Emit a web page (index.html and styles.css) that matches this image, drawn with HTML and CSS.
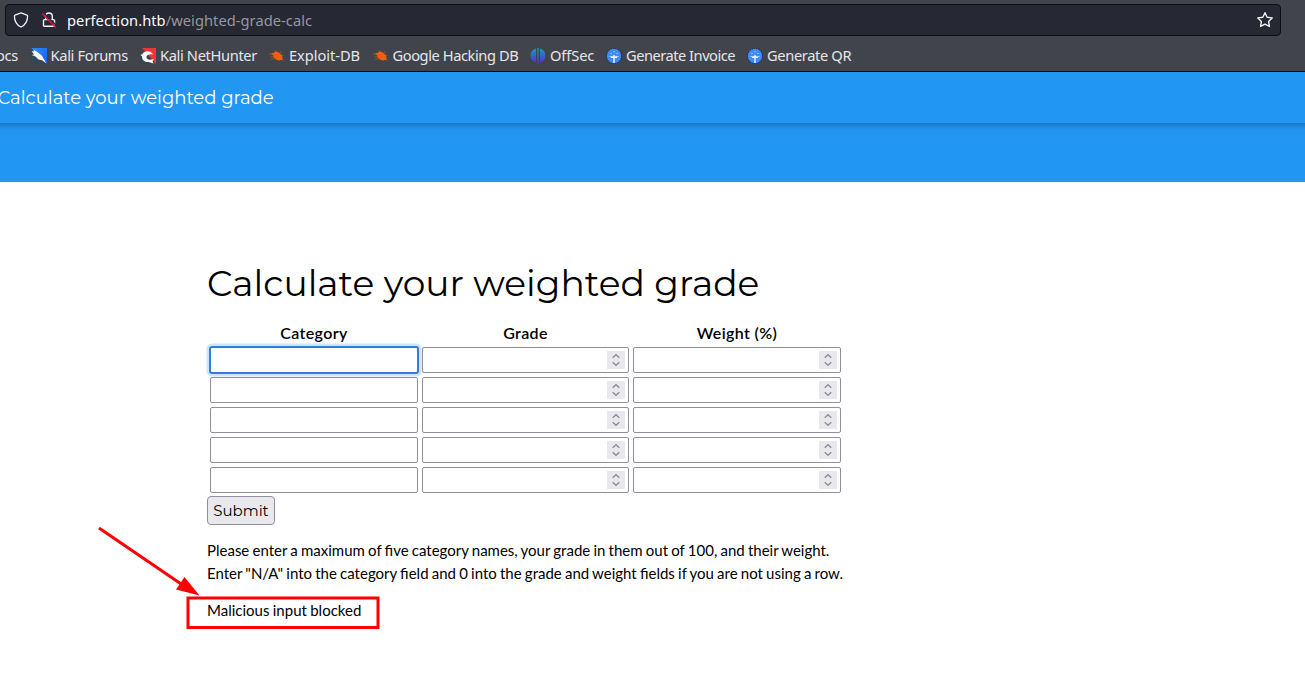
FILE: index.html
```html
<!DOCTYPE html>
<html lang="en">
<head>
<meta charset="utf-8">
<title>Calculate your weighted grade</title>
<link rel="stylesheet" href="styles.css">
</head>
<body>
<svg class="defs" aria-hidden="true">
  <defs>
    <linearGradient id="kali-blue" x1="0" y1="0" x2="1" y2="1"><stop offset="0" stop-color="#2b8cff"/><stop offset="1" stop-color="#1460e8"/></linearGradient>
    <linearGradient id="offsec" x1="0" y1="0" x2="0" y2="1"><stop offset="0" stop-color="#0fa3b5"/><stop offset="1" stop-color="#5a26d8"/></linearGradient>
    <symbol id="bug" viewBox="0 0 16 16">
      <path d="M2 5 4.500 5 6.500 3.300l2.500.7 2 1.200 1 1.500 2.500.3-2 1 1.500 1.600-.8.9 1.300 2-2.500-.7-1.500.6-2-.2-2-1.100-1.800-1.400.3-.8L3.500 8l1-.7z" fill="#f0600f"/>
      <path d="M0 5.500 4.500 7M7.500 4 6 2.500M11 5.500l.8-2M6 10.500 1.500 11.500M1.500 9l3.500-.3" stroke="#b05424" stroke-width=".8" fill="none"/>
    </symbol>
    <symbol id="faucet" viewBox="0 0 16 16">
      <circle cx="8" cy="8" r="7.500" fill="#3c8cff" stroke="#10213d" stroke-width="1" stroke-dasharray="1 1"/>
      <path d="M3.500 8h9v1h-9z" fill="#b9d6ff"/>
      <path d="M5 9h6v1H5zM7.300 7h1.400v8H7.300z" fill="#f1f8ff"/>
      <path d="M4.500 5h1v1h-1zM7.500 3h1v1h-1zM10.500 5h1v1h-1z" fill="#c6dfff"/>
    </symbol>
    <symbol id="spin" viewBox="0 0 18 18"><path d="m5.700 6.800 3.300-3 3.300 3M5.700 11.300l3.300 3 3.300-3" fill="none" stroke="#8f8f9d" stroke-width="1.500"/></symbol>
  </defs>
</svg>

<header class="browser">
  <div class="address">
    <svg class="shield" viewBox="0 0 16 16"><path d="M8 .9 14 3.100c.4.100.6.400.6.800 0 5-2.200 8.900-6.600 11.100C3.600 12.800 1.400 8.900 1.400 3.900c0-.4.200-.7.600-.8z" fill="none" stroke="#f2f2f6" stroke-width="1.300" stroke-linejoin="round"/></svg>
    <svg class="lock" viewBox="0 0 16 16"><path d="M4.700 7.500V4.300a3.300 3.300 0 0 1 6.600 0v3.200M3.500 7.600h9c.7 0 1 .3 1 1v4.600c0 .7-.3 1-1 1h-9c-.7 0-1-.3-1-1V8.600c0-.7.300-1 1-1z" fill="none" stroke="#f2f2f6" stroke-width="1.400"/><path d="m2.500 .8 13 13" stroke="#262833" stroke-width="1.600"/><path d="m1.200 1.500 13.500 14" stroke="#e0143c" stroke-width="1.500"/></svg>
    <span class="url"><b>perfection.htb</b>/weighted-grade-calc</span>
    <svg class="star" viewBox="0 0 16 16"><path d="m8 .7 2.200 4.500 5 .7-3.600 3.500.8 5L8 12.100l-4.400 2.300.8-5L.8 5.900l5-.7z" fill="none" stroke="#f2f2f6" stroke-width="1.400" stroke-linejoin="round"/></svg>
  </div>
  <nav class="bookmarks">
    <span class="mark cut"><span>ocs</span></span>
    <span class="mark forums"><svg viewBox="0 0 16 16"><path d="M0 0h16v16z" fill="url(#kali-blue)"/><path d="M0 0v16h16z" fill="#354554"/><path d="M.5 3 3 3.500 2.500 1.500 7.500 4.800l3.500 3 1.500 2.700L15.500 15.500l-4-3-4-1-3-3L.7 7 3 6.500z" fill="#f5f7f9"/></svg><span>Kali Forums</span></span>
    <span class="mark nethunter"><svg viewBox="0 0 16 16"><path d="M2 0h14v16z" fill="#f5333a"/><path d="M0 3v13h15z" fill="#374550"/><path d="M13 6.500C12 4 9 2.800 6.500 3.300 4.500 3.600 3 5 2.500 6L.5 7 2 8.200C1.800 11.500 4.500 14.500 8.500 14l5 1.500-1-2.500 1.500-2-3.500.7C8 12 6 10.500 6.500 8.500 7.500 6.500 10 5.800 13 6.500z" fill="#fff"/></svg><span>Kali NetHunter</span></span>
    <span class="mark exploit"><svg><use href="#bug"/></svg><span>Exploit-DB</span></span>
    <span class="mark google"><svg><use href="#bug"/></svg><span>Google Hacking DB</span></span>
    <span class="mark offsec"><svg viewBox="0 0 16 16"><path d="M6 .6v13.800C2.500 13.500.5 11 .5 7.500S2.800 1.500 6 .6zM7.300 0h1.400v16H7.300zM10 .6c3.200.9 5.500 3.400 5.500 6.900s-2 6-5.500 6.900z" fill="url(#offsec)"/></svg><span>OffSec</span></span>
    <span class="mark invoice"><svg><use href="#faucet"/></svg><span>Generate Invoice</span></span>
    <span class="mark qr"><svg><use href="#faucet"/></svg><span>Generate QR</span></span>
  </nav>
</header>

<div class="topbar"><span>Calculate your weighted grade</span></div>
<div class="banner"></div>

<main class="content">
  <h1>Calculate your weighted grade</h1>
  <form>
    <div class="grid">
      <b>Category</b><b>Grade</b><b>Weight (%)</b>
      <i class="field focused"></i><i class="field number"><svg><use href="#spin"/></svg></i><i class="field number"><svg><use href="#spin"/></svg></i>
      <i class="field"></i><i class="field number"><svg><use href="#spin"/></svg></i><i class="field number"><svg><use href="#spin"/></svg></i>
      <i class="field"></i><i class="field number"><svg><use href="#spin"/></svg></i><i class="field number"><svg><use href="#spin"/></svg></i>
      <i class="field"></i><i class="field number"><svg><use href="#spin"/></svg></i><i class="field number"><svg><use href="#spin"/></svg></i>
      <i class="field"></i><i class="field number"><svg><use href="#spin"/></svg></i><i class="field number"><svg><use href="#spin"/></svg></i>
    </div>
    <button type="button" class="submit"><span>Submit</span></button>
  </form>
  <p class="help"><span>Please enter a maximum of five category names, your grade in them out of 100, and their weight.</span><br><span>Enter "N/A" into the category field and 0 into the grade and weight fields if you are not using a row.</span></p>
  <p class="result">Malicious input blocked</p>
</main>

<svg class="annotation" viewBox="0 0 300 120">
  <path d="m19 13 88 60" stroke="#f00" stroke-width="3"/>
  <path d="m119.500 80.500-23.500-6 8.500-12.500z" fill="#f00"/>
  <rect x="108" y="83" width="190" height="29.500" fill="none" stroke="#f00" stroke-width="3"/>
</svg>
</body>
</html>
```
FILE: styles.css
```css
* { box-sizing: border-box; }
body {
  margin: 0;
  width: 1305px;
  height: 683px;
  overflow: hidden;
  position: relative;
  background: #fff;
  color: #000;
  font: 15px/22.5px Lato, sans-serif;
}
.defs { position: absolute; width: 0; height: 0; }
.browser {
  position: relative;
  z-index: 1;
  height: 72px;
  padding: 4px 24px 0 5px;
  background: #42444c;
  border-bottom: 1px solid #0c0c0d;
  font-family: "Noto Sans", sans-serif;
}
.address {
  display: flex;
  align-items: center;
  height: 32px;
  padding: 0 7px;
  background: #262833;
  border: 1px solid #0d0e12;
  border-radius: 4px;
}
.address svg { width: 16px; height: 16px; flex: none; }
.shield { margin-right: 12px; }
.lock { margin-right: 10px; }
.url { flex: 1; font-size: 14.670px; letter-spacing: .05px; color: #96979f; }
.url b { font-weight: 400; color: #fbfbfe; }
.bookmarks {
  display: flex;
  align-items: center;
  height: 35px;
  padding-top: 4px;
  margin-left: -5px;
  white-space: nowrap;
  font-size: 14.670px;
  color: #e6e6ea;
}
.mark { display: flex; align-items: center; gap: 4px; flex: none; letter-spacing: -.36px; }
.mark svg { width: 16px; height: 16px; flex: none; }
.mark > span { margin-top: -1px; }
.cut { width: 30.500px; letter-spacing: -.3px; }
.cut > span { margin-left: -4px; }
.forums { width: 109.500px; letter-spacing: -.32px; }
.nethunter { width: 129px; }
.exploit { width: 103.500px; letter-spacing: -.05px; }
.google { width: 157.500px; letter-spacing: -.43px; }
.offsec { width: 76px; letter-spacing: -.1px; }
.invoice { width: 141px; letter-spacing: -.5px; }
.topbar {
  position: relative;
  height: 51px;
  margin: 0 -20px;
  padding: 13px 20px 0;
  background: #2196f3;
  box-shadow: 0 2px 5px rgba(0,0,0,.16), 0 2px 10px rgba(0,0,0,.12);
  color: #fff;
  font: 400 18px/27px Montserrat, Inter, sans-serif;
}
.topbar span { margin-left: -2.500px; }
.banner { height: 59px; background: #2196f3; }
.content { padding: 74px 0 0 207px; }
h1 {
  margin: 0 0 10px;
  font: 400 36px/54px Montserrat, Inter, sans-serif;
  white-space: nowrap;
}
.grid {
  display: grid;
  grid-template-columns: 208px 207px 208px;
  grid-template-rows: 23px repeat(5, 26px);
  column-gap: 4px;
  row-gap: 4px;
  padding: 0 3px;
}
.grid b { text-align: center; font-size: 16px; line-height: 25px; font-weight: 600; letter-spacing: .35px; }
.field { display: flex; background: #fff; border: 1px solid #8f8f9d; border-radius: 2px; }
.focused {
  margin: -1px;
  border: 2px solid #2f7fe0;
  border-radius: 3px;
  box-shadow: 0 0 0 2.500px #cfe5fd;
}
.number { justify-content: flex-end; align-items: center; padding-right: 3px; }
.number svg { width: 18px; height: 18px; background: #e9e9ed; }
.submit {
  display: flex;
  align-items: center;
  justify-content: center;
  width: 68px;
  height: 29px;
  margin-top: 3px;
  padding: 0;
  background: #e9e9ed;
  border: 1px solid #8f8f9d;
  border-radius: 4px;
  color: #000;
  font: 400 15px/22px Montserrat, Inter, sans-serif;
}
.help { margin: 14px 0 0; white-space: nowrap; word-spacing: -.64px; }
.result { margin: 15px 0 0; word-spacing: -.5px; }
.annotation { position: absolute; left: 80px; top: 515px; width: 300px; height: 120px; }
```
